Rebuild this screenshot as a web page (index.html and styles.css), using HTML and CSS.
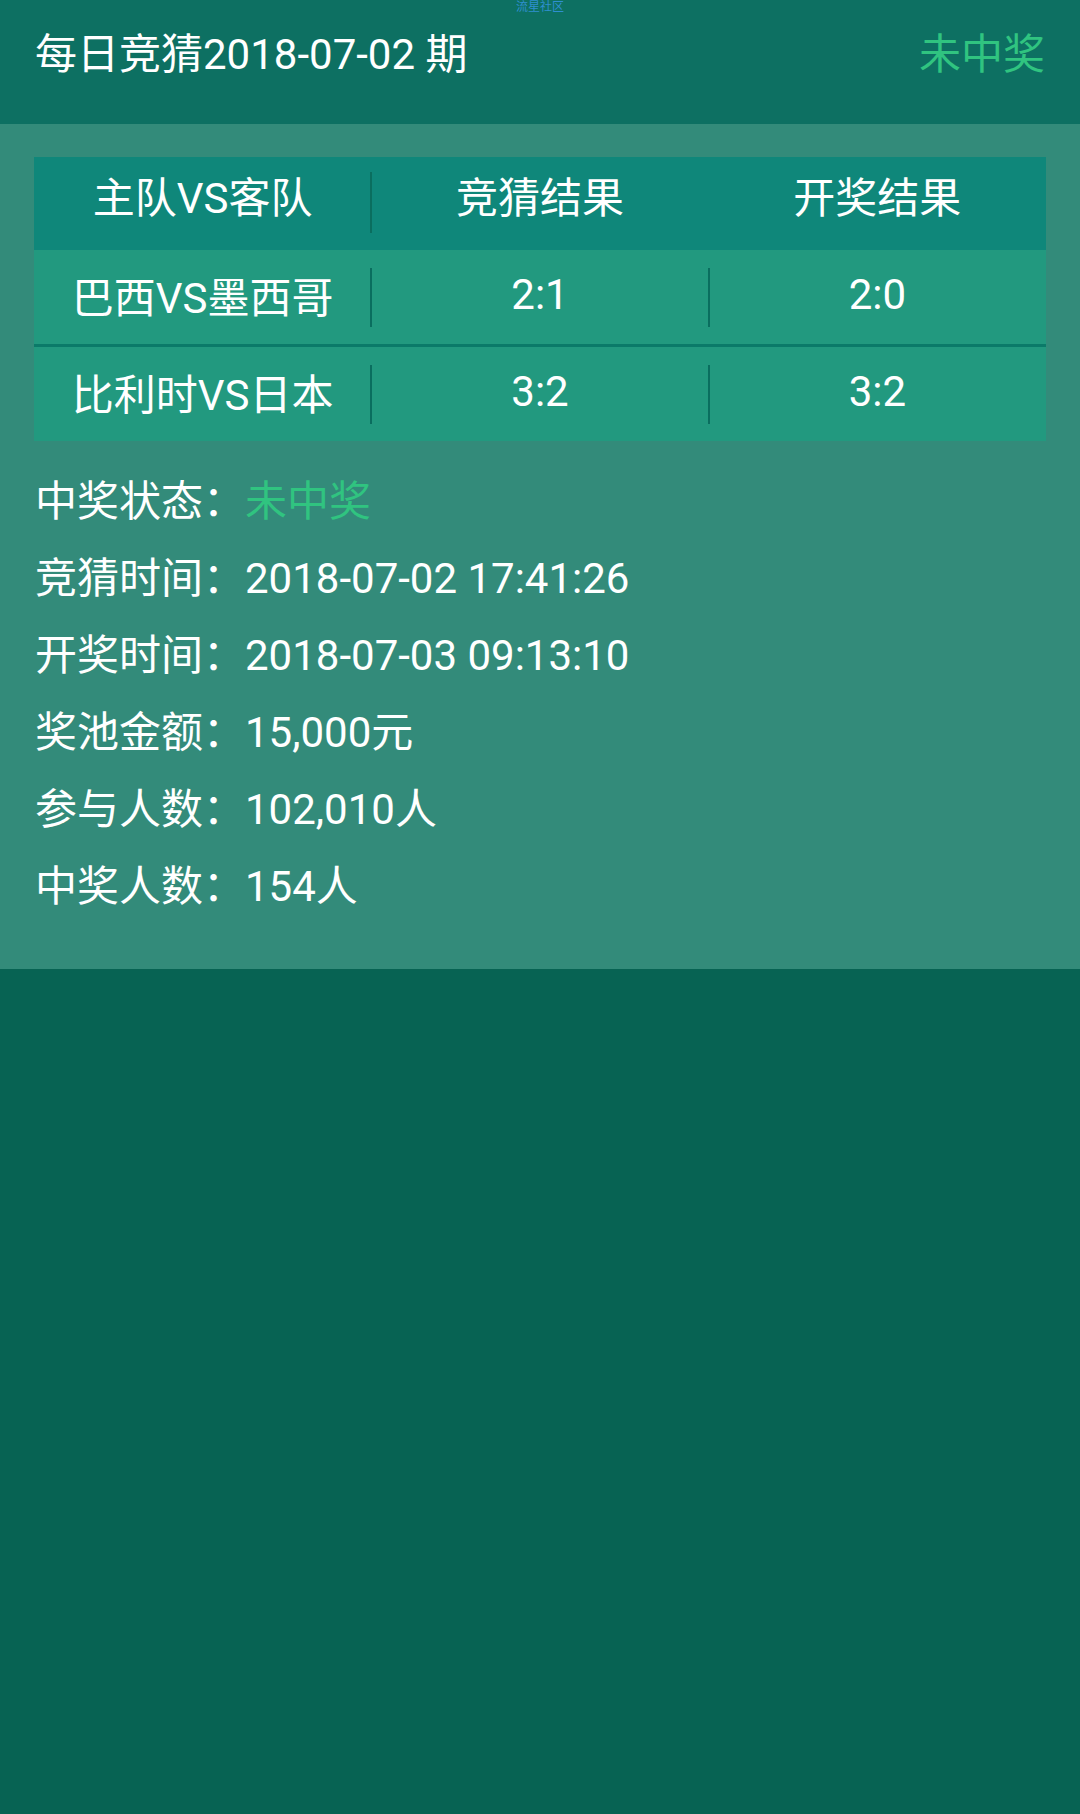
FILE: index.html
```html
<!DOCTYPE html>
<html lang="zh-CN">
<head>
<meta charset="utf-8">
<title>每日竞猜</title>
<link rel="stylesheet" href="styles.css">
</head>
<body>
<div class="watermark">流星社区</div>
<header class="topbar">
  <div class="title">每日竞猜2018-07-02 期</div>
  <div class="status">未中奖</div>
</header>
<section class="panel">
  <div class="table">
    <div class="row head">
      <div class="cell sep">主队VS客队</div>
      <div class="cell">竞猜结果</div>
      <div class="cell">开奖结果</div>
    </div>
    <div class="row body">
      <div class="cell sep">巴西VS墨西哥</div>
      <div class="cell sep">2:1</div>
      <div class="cell">2:0</div>
    </div>
    <div class="divider"></div>
    <div class="row body">
      <div class="cell sep">比利时VS日本</div>
      <div class="cell sep">3:2</div>
      <div class="cell">3:2</div>
    </div>
  </div>
  <div class="info">
    <div class="line">中奖状态：<span class="green">未中奖</span></div>
    <div class="line">竞猜时间：2018-07-02 17:41:26</div>
    <div class="line">开奖时间：2018-07-03 09:13:10</div>
    <div class="line">奖池金额：15,000元</div>
    <div class="line">参与人数：102,010人</div>
    <div class="line">中奖人数：154人</div>
  </div>
</section>
</body>
</html>
```
FILE: styles.css
```css
html, body {
  margin: 0;
  padding: 0;
}
body {
  width: 1080px;
  min-height: 1814px;
  background: #076353;
  font-family: Roboto, "Noto Sans CJK SC", sans-serif;
  color: #ffffff;
  position: relative;
}
.watermark {
  position: absolute;
  top: 0;
  left: 0;
  right: 0;
  text-align: center;
  font-size: 12px;
  line-height: 14px;
  color: #2f8fd0;
}
.topbar {
  background: #0d7062;
  height: 124px;
  box-sizing: border-box;
  padding: 24px 35px 0 35px;
  display: flex;
  justify-content: space-between;
  align-items: flex-start;
  font-size: 42px;
  line-height: 62px;
}
.status {
  color: #30c480;
}
.panel {
  background: #338b7a;
  padding: 33px 34px 44px 34px;
}
.table {
  display: flex;
  flex-direction: column;
}
.row {
  display: grid;
  grid-template-columns: 1fr 1fr 1fr;
  font-size: 42px;
}
.row.head {
  background: #0f877a;
  height: 93px;
}
.row.body {
  background: #22997f;
  height: 94px;
}
.divider {
  height: 3px;
  background: #0b7a69;
}
.cell {
  display: flex;
  align-items: center;
  justify-content: center;
  position: relative;
  box-sizing: border-box;
}
.row.head .cell {
  padding-bottom: 18px;
}
.row.body .cell {
  padding-bottom: 5px;
}
.cell.sep::after {
  content: "";
  position: absolute;
  right: -1px;
  top: 18px;
  bottom: 17px;
  width: 2px;
  background: #0a6e5f;
}
.row.head .cell.sep::after {
  top: 15px;
  bottom: 17px;
}
.info {
  padding-left: 1px;
  margin-top: 22px;
  font-size: 42px;
  line-height: 77px;
}
.green {
  color: #30c480;
}
```
